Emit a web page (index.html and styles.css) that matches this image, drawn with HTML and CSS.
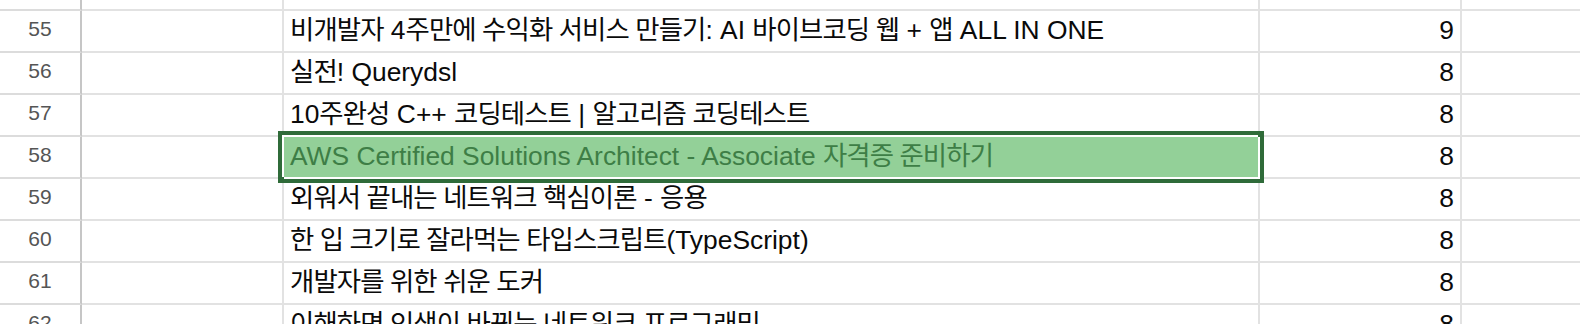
FILE: index.html
```html
<!DOCTYPE html>
<html lang="ko">
<head>
<meta charset="utf-8">
<title>Sheet</title>
<link rel="stylesheet" href="styles.css">
</head>
<body>
<div class="sheet">
  <div class="row row-partial">
    <div class="cell head"></div><div class="cell"></div><div class="cell"></div><div class="cell"></div><div class="cell last"></div>
  </div>
  <div class="row">
    <div class="cell head">55</div><div class="cell"></div><div class="cell text"><span class="ko">비개발자</span> 4<span class="ko">주만에 수익화 서비스 만들기</span>: AI <span class="ko">바이브코딩 웹</span> + <span class="ko">앱</span> ALL IN ONE</div><div class="cell num">9</div><div class="cell last"></div>
  </div>
  <div class="row">
    <div class="cell head">56</div><div class="cell"></div><div class="cell text"><span class="ko">실전</span>! Querydsl</div><div class="cell num">8</div><div class="cell last"></div>
  </div>
  <div class="row">
    <div class="cell head">57</div><div class="cell"></div><div class="cell text">10<span class="ko">주완성</span> C++ <span class="ko">코딩테스트</span> | <span class="ko">알고리즘 코딩테스트</span></div><div class="cell num">8</div><div class="cell last"></div>
  </div>
  <div class="row">
    <div class="cell head">58</div><div class="cell"></div><div class="cell text selected">AWS Certified Solutions Architect - Associate <span class="ko">자격증 준비하기</span></div><div class="cell num">8</div><div class="cell last"></div>
  </div>
  <div class="row">
    <div class="cell head">59</div><div class="cell"></div><div class="cell text"><span class="ko">외워서 끝내는 네트워크 핵심이론</span> - <span class="ko">응용</span></div><div class="cell num">8</div><div class="cell last"></div>
  </div>
  <div class="row">
    <div class="cell head">60</div><div class="cell"></div><div class="cell text"><span class="ko">한 입 크기로 잘라먹는 타입스크립트</span>(TypeScript)</div><div class="cell num">8</div><div class="cell last"></div>
  </div>
  <div class="row">
    <div class="cell head">61</div><div class="cell"></div><div class="cell text"><span class="ko">개발자를 위한 쉬운 도커</span></div><div class="cell num">8</div><div class="cell last"></div>
  </div>
  <div class="row">
    <div class="cell head">62</div><div class="cell"></div><div class="cell text"><span class="ko">이해하면 인생이 바뀌는 네트워크 프로그래밍</span></div><div class="cell num">8</div><div class="cell last"></div>
  </div>
</div>
</body>
</html>
```
FILE: styles.css
```css
html, body {
  margin: 0;
  padding: 0;
  background: #ffffff;
  overflow: hidden;
}

body {
  width: 1580px;
  height: 324px;
  font-family: "Liberation Sans", Arial, "Noto Sans CJK KR", sans-serif;
}

.sheet {
  display: flex;
  flex-direction: column;
}

.row {
  display: grid;
  grid-template-columns: 82px 202px 976px 202px 1fr;
  height: 42px;
  flex: none;
}

.row-partial {
  height: 11px;
}

.cell {
  box-sizing: border-box;
  border-right: 2px solid #e2e2e2;
  border-bottom: 2px solid #e2e2e2;
  overflow: hidden;
  white-space: nowrap;
}

.cell.last {
  border-right: none;
}

.head {
  border-right-color: #c6c6c6;
  border-bottom-color: #dcdcdc;
  text-align: center;
  color: #555555;
  font-size: 21px;
  line-height: 36px;
}

.text {
  font-size: 26.4px;
  line-height: 39px;
  color: #0a0a0a;
  padding-left: 6px;
}

.ko {
  letter-spacing: -0.9px;
}

.num {
  font-size: 26.4px;
  line-height: 39px;
  color: #0a0a0a;
  text-align: right;
  padding-right: 6px;
}

.selected {
  position: relative;
  z-index: 1;
  overflow: visible;
  background: #93d098;
  color: #3e7e46;
  border-right-color: #ffffff;
  border-bottom-color: #ffffff;
  box-shadow: -2px -2px 0 0 #ffffff, -1px -1px 0 5px #2f6b39;
}
```
